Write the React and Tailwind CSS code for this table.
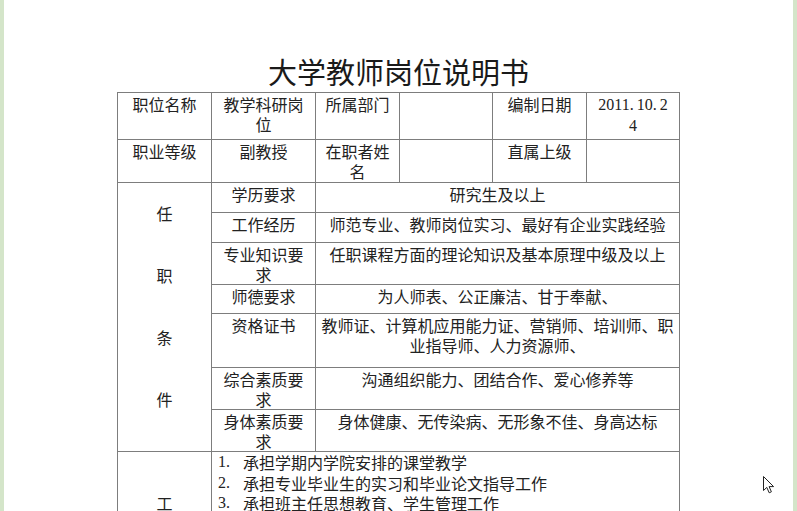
export default function App() {
  const td = "border border-[#7d7d7d] align-top px-[6px] pt-[1px] text-center";
  const num = "font-[family-name:'Liberation_Serif',serif] text-[16px]";
  const one = (t) => <div className="whitespace-nowrap">{t}</div>;
  const dot = <span className="inline-block w-[7px] text-left">.</span>;
  return (
    <div className="relative flex h-[511px] w-full overflow-hidden bg-white text-[16px] leading-[20px] text-[#222] font-[family-name:'Noto_Sans_CJK_SC',sans-serif]">
      <div className="w-[4px] shrink-0 bg-[#d4e5c9]" />
      <div className="flex-1 flex flex-col items-center">
        <div className="mt-[57px] text-[29px] leading-[29px] whitespace-nowrap text-[#1a1a1a]">大学教师岗位说明书</div>
        <table className="mt-[6px] w-[563px] table-fixed border-collapse">
          <colgroup>
            <col className="w-[94px]" />
            <col className="w-[104px]" />
            <col className="w-[84px]" />
            <col className="w-[93px]" />
            <col className="w-[94px]" />
            <col className="w-[93px]" />
          </colgroup>
          <tbody>
            <tr className="h-[47px]">
              <td className={td}>职位名称</td>
              <td className={td}>{one("教学科研岗")}{one("位")}</td>
              <td className={td}>所属部门</td>
              <td className={td}></td>
              <td className={td}>编制日期</td>
              <td className={td}>
                <div className={`${num} leading-[21px] whitespace-nowrap`}>2011{dot}10{dot}2</div>
                <div className={`${num} leading-[21px]`}>4</div>
              </td>
            </tr>
            <tr className="h-[43px]">
              <td className={td}>职业等级</td>
              <td className={td}>副教授</td>
              <td className={td}>{one("在职者姓")}{one("名")}</td>
              <td className={td}></td>
              <td className={td}>直属上级</td>
              <td className={td}></td>
            </tr>
            <tr className="h-[30px]">
              <td className={`${td} !pt-[20px]`} rowSpan={7}>
                <div className="flex flex-col items-center gap-[41px] leading-[21px]">
                  <div>任</div>
                  <div>职</div>
                  <div>条</div>
                  <div>件</div>
                </div>
              </td>
              <td className={td}>学历要求</td>
              <td className={td} colSpan={4}>研究生及以上</td>
            </tr>
            <tr className="h-[30px]">
              <td className={td}>工作经历</td>
              <td className={td} colSpan={4}>
                <div className="flex justify-center whitespace-nowrap">师范专业、教师岗位实习、最好有企业实践经验</div>
              </td>
            </tr>
            <tr className="h-[42px]">
              <td className={td}>{one("专业知识要")}{one("求")}</td>
              <td className={td} colSpan={4}>
                <div className="flex justify-center whitespace-nowrap">任职课程方面的理论知识及基本原理中级及以上</div>
              </td>
            </tr>
            <tr className="h-[29px]">
              <td className={td}>师德要求</td>
              <td className={td} colSpan={4}>为人师表、公正廉洁、甘于奉献、</td>
            </tr>
            <tr className="h-[54px]">
              <td className={td}>资格证书</td>
              <td className={td} colSpan={4}>
                <div className="flex justify-center whitespace-nowrap">教师证、计算机应用能力证、营销师、培训师、职</div>
                <div className="flex justify-center whitespace-nowrap">业指导师、人力资源师、</div>
              </td>
            </tr>
            <tr className="h-[41px]">
              <td className={td}>{one("综合素质要")}{one("求")}</td>
              <td className={td} colSpan={4}>沟通组织能力、团结合作、爱心修养等</td>
            </tr>
            <tr className="h-[42px]">
              <td className={td}>{one("身体素质要")}{one("求")}</td>
              <td className={td} colSpan={4}>身体健康、无传染病、无形象不佳、身高达标</td>
            </tr>
            <tr className="h-[200px]">
              <td className={`${td} !pt-[41px]`}>
                <div className="flex flex-col items-center gap-[41px] leading-[21px]">
                  <div>工</div>
                  <div>作</div>
                  <div>职</div>
                  <div>责</div>
                </div>
              </td>
              <td className={`${td} !text-left !pt-0`} colSpan={5}>
                <div className="leading-[20.5px]">
                  {[
                    "承担学期内学院安排的课堂教学",
                    "承担专业毕业生的实习和毕业论文指导工作",
                    "承担班主任思想教育、学生管理工作",
                  ].map((t, i) => (
                    <div key={i} className="flex whitespace-nowrap">
                      <span className={`${num} w-[25px] shrink-0`}>{i + 1}.</span>
                      <span>{t}</span>
                    </div>
                  ))}
                </div>
              </td>
            </tr>
          </tbody>
        </table>
      </div>
      <div className="w-[4px] shrink-0 bg-[#d4e5c9]" />
      <svg className="absolute left-[762px] top-[475px]" width="14" height="20" viewBox="0 0 14 20">
        <path d="M1.5 1.5 L1.5 15.5 L4.8 12.4 L7.2 17.8 L9.4 16.8 L7.1 11.6 L11.6 11.6 Z" fill="#fff" stroke="#222" strokeWidth="1" strokeLinejoin="round" />
      </svg>
    </div>
  );
}
